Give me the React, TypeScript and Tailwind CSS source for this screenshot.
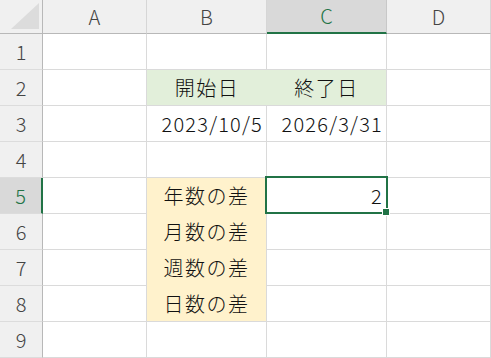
const cols = ["A", "B", "C", "D"];
const colW = ["w-[104px]", "w-[120px]", "w-[120px]", "flex-1"];

type Cell = { text?: string; align?: "left" | "center" | "right"; bg?: string; noRight?: boolean; noBottom?: boolean; num?: boolean };

const data: Record<string, Cell> = {
  "2-1": { text: "開始日", align: "center", bg: "bg-[#e2efda]", noRight: true },
  "2-2": { text: "終了日", align: "center", bg: "bg-[#e2efda]" },
  "3-1": { text: "2023/10/5", align: "right", num: true },
  "3-2": { text: "2026/3/31", align: "right", num: true },
  "5-1": { text: "年数の差", align: "center", bg: "bg-[#fff2cc]", noBottom: true },
  "6-1": { text: "月数の差", align: "center", bg: "bg-[#fff2cc]", noBottom: true },
  "7-1": { text: "週数の差", align: "center", bg: "bg-[#fff2cc]", noBottom: true },
  "8-1": { text: "日数の差", align: "center", bg: "bg-[#fff2cc]" },
  "5-2": { text: "2", align: "right", num: true },
};

export default function App() {
  return (
    <div className="relative w-[491px] h-[358px] overflow-hidden bg-white text-[#111] font-light font-['Noto_Sans_CJK_JP','Noto_Sans',sans-serif]">
      {/* column headers */}
      <div className="flex h-[34px]">
        <div className="relative w-[43px] bg-[#f0f0f0] border-r border-b border-[#b8b8b8]">
          <svg className="absolute left-0 top-0" width="42" height="33">
            <polygon points="39,3 39,29 11,29" fill="#dcdcdc" />
          </svg>
        </div>
        {cols.map((c, i) => (
          <div
            key={c}
            className={`${colW[i]} flex items-center justify-center text-[20px] border-r ${
              c === "C"
                ? "bg-[#d9d9d9] text-[#217346] border-b-2 border-b-[#217346] border-r-[#c8c8c8]"
                : "bg-[#f0f0f0] text-[#444] border-b border-[#b8b8b8] border-r-[#d6d6d6]"
            }`}
          >
            {c}
          </div>
        ))}
      </div>
      {Array.from({ length: 9 }, (_, r) => r + 1).map((row) => (
        <div key={row} className="flex h-[36px]">
          <div
            className={`w-[43px] flex items-center justify-center text-[20px] border-b border-b-[#dcdcdc] ${
              row === 5
                ? "bg-[#d9d9d9] text-[#217346] border-r-2 border-r-[#217346]"
                : "bg-[#f0f0f0] text-[#444] border-r border-r-[#b8b8b8]"
            }`}
          >
            {row}
          </div>
          {cols.map((c, i) => {
            const cell = data[`${row}-${i}`] ?? {};
            const justify =
              cell.align === "center" ? "justify-center" : cell.align === "right" ? "justify-end pr-[3px]" : "justify-start pl-1";
            return (
              <div
                key={c}
                className={`${colW[i]} flex items-center text-[20px] ${cell.num ? "tracking-[1.2px]" : "tracking-[1.5px]"} ${justify} ${cell.bg ?? "bg-white"} ${
                  cell.noRight ? "" : "border-r border-r-[#dadada]"
                } ${cell.noBottom ? "" : "border-b border-b-[#dadada]"}`}
              >
                {cell.text}
              </div>
            );
          })}
        </div>
      ))}
      {/* active cell selection C5 */}
      <div className="absolute left-[265px] top-[176px] w-[123px] h-[38px] border-2 border-[#217346]" />
      <div className="absolute left-[383px] top-[209px] w-[6px] h-[6px] bg-[#217346] outline outline-1 outline-white" />
    </div>
  );
}
